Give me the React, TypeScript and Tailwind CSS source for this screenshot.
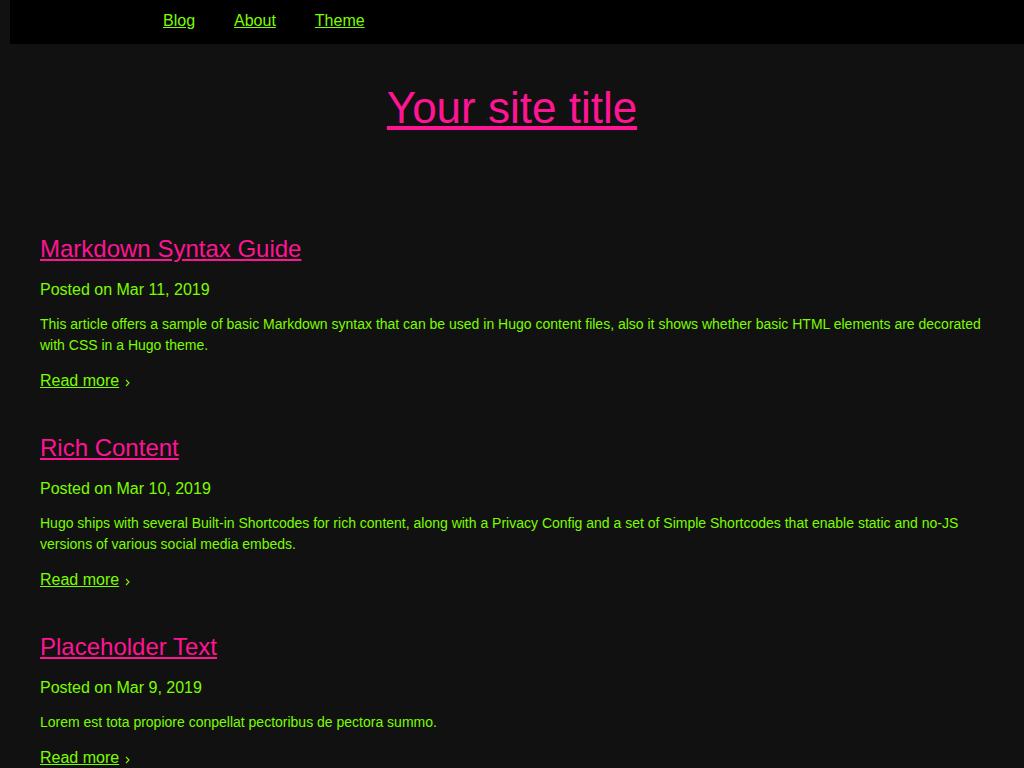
import React from "react";

const posts = [
  {
    title: "Markdown Syntax Guide",
    date: "Mar 11, 2019",
    summary:
      "This article offers a sample of basic Markdown syntax that can be used in Hugo content files, also it shows whether basic HTML elements are decorated with CSS in a Hugo theme.",
  },
  {
    title: "Rich Content",
    date: "Mar 10, 2019",
    summary:
      "Hugo ships with several Built-in Shortcodes for rich content, along with a Privacy Config and a set of Simple Shortcodes that enable static and no-JS versions of various social media embeds.",
  },
  {
    title: "Placeholder Text",
    date: "Mar 9, 2019",
    summary: "Lorem est tota propiore conpellat pectoribus de pectora summo.",
  },
];

export default function App() {
  return (
    <div className="min-h-screen bg-[#111111] text-[#7cfc00]" style={{ fontFamily: '"Liberation Sans", Arial, sans-serif' }}>
      <header className="ml-[10px] h-[44px] bg-black flex items-center pl-[153px] pb-[2px] gap-[39px] text-[16px]">
        <a href="#" className="underline text-[#7cfc00]">Blog</a>
        <a href="#" className="underline text-[#7cfc00]">About</a>
        <a href="#" className="underline text-[#7cfc00]">Theme</a>
      </header>
      <div className="flex justify-center pt-[38px]">
        <a href="#" className="underline text-[#ff1493] text-[44px] leading-[52px]">Your site title</a>
      </div>
      <main className="px-[40px] pt-[101px]">
        {posts.map((p, i) => (
          <article key={i} className="mb-[44px]">
            <h2 className="text-[24px] leading-[28px]">
              <a href="#" className="underline text-[#ff1493]">{p.title}</a>
            </h2>
            <p className="mt-[18px] text-[16px] leading-[18px]">Posted on {p.date}</p>
            <p className="mt-[15px] text-[14px] leading-[21px]">{p.summary}</p>
            <div className="mt-[16px] text-[16px] leading-[18px] flex items-center">
              <a href="#" className="underline text-[#7cfc00]">Read more</a>
              <svg className="ml-[6px] mt-[4px]" width="5" height="8" viewBox="0 0 5 8" fill="none">
                <path d="M1 1 L4 4 L1 7" stroke="#7cfc00" strokeWidth="1.1" />
              </svg>
            </div>
          </article>
        ))}
      </main>
    </div>
  );
}
